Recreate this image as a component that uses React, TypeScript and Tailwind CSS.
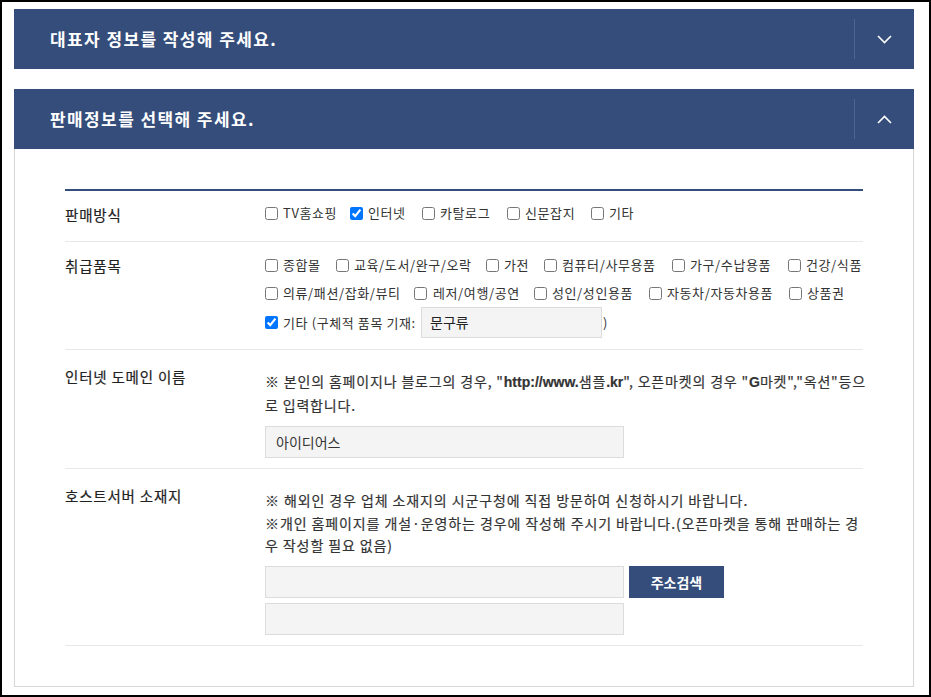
import React from "react";

const FONT = "font-['Noto_Sans_CJK_KR','Noto_Sans',sans-serif]";
const LAT = "font-['Liberation_Sans','Noto_Sans_CJK_KR',sans-serif] font-bold tracking-normal";

function Chevron({ up }: { up?: boolean }) {
  return (
    <svg width="15" height="9" viewBox="0 0 15 9" fill="none">
      {up ? (
        <polyline points="1,8 7.5,1.5 14,8" stroke="white" strokeWidth="1.6" />
      ) : (
        <polyline points="1,1 7.5,7.5 14,1" stroke="white" strokeWidth="1.6" />
      )}
    </svg>
  );
}

function Header({ title, up }: { title: string; up?: boolean }) {
  return (
    <div className="flex h-[60px] items-center bg-[#344d7a]">
      <div className="flex-1 pl-[36px] text-[17px] font-bold tracking-[1.4px] text-white">{title}</div>
      <div className="h-[40px] w-[1px] bg-[#4d6590]" />
      <div className="flex h-full w-[59px] items-center justify-center">
        <Chevron up={up} />
      </div>
    </div>
  );
}

function Opt({ label, checked, w, gap }: { label: string; checked?: boolean; w?: string; gap?: string }) {
  return (
    <label className={`flex h-full shrink-0 items-center whitespace-nowrap ${w ?? ""}`}>
      <input type="checkbox" defaultChecked={checked} className="m-0 h-[13px] w-[13px] shrink-0" />
      <span className={gap ?? "ml-[5px]"}>{label}</span>
    </label>
  );
}

const LABEL = "w-[200px] shrink-0 text-[14.5px] tracking-[0.8px] text-[#222] [-webkit-text-stroke:0.2px_#222]";
const PARA = "whitespace-nowrap text-[14px] leading-[22.5px] text-[#333] [-webkit-text-stroke:0.2px_#333]";

export default function App() {
  return (
    <div className={`box-border h-[697px] w-[931px] overflow-hidden border-2 border-black bg-white ${FONT}`}>
      <div className="ml-[12px] mt-[7px] w-[900px]">
        <Header title="대표자 정보를 작성해 주세요." />
        <div className="h-[20px]" />
        <Header title="판매정보를 선택해 주세요." up />
        <div className="border border-t-0 border-[#d6d6d6] px-[50px] pb-[40px] pt-[40px]">
          <div className="border-t-2 border-[#344d7a] text-[#333]">
            {/* Row 1 */}
            <div className="flex border-b border-[#e8e8e8] pb-[14px] pt-[8px]">
              <div className={`flex h-[28px] items-center pt-[4px] ${LABEL}`}>판매방식</div>
              <div className="flex h-[28px] text-[13px] tracking-[0.6px]">
                <Opt label="TV홈쇼핑" w="w-[85px]" />
                <Opt label="인터넷" checked w="w-[72px]" />
                <Opt label="카탈로그" w="w-[85px]" />
                <Opt label="신문잡지" w="w-[84px]" />
                <Opt label="기타" />
              </div>
            </div>
            {/* Row 2 */}
            <div className="flex border-b border-[#e8e8e8] pb-[11px] pt-[9px]">
              <div className={`flex h-[28px] items-center pt-[2px] ${LABEL}`}>취급품목</div>
              <div className="flex flex-col text-[13px] tracking-[0.6px]">
                <div className="flex h-[28px]">
                  <Opt label="종합몰" w="w-[71px]" />
                  <Opt label="교육/도서/완구/오락" w="w-[150px]" />
                  <Opt label="가전" w="w-[58px]" />
                  <Opt label="컴퓨터/사무용품" w="w-[128px]" />
                  <Opt label="가구/수납용품" w="w-[116px]" />
                  <Opt label="건강/식품" />
                </div>
                <div className="flex h-[28px]">
                  <Opt label="의류/패션/잡화/뷰티" w="w-[149px]" />
                  <Opt label="레저/여행/공연" w="w-[120px]" gap="ml-[6px]" />
                  <Opt label="성인/성인용품" w="w-[115px]" />
                  <Opt label="자동차/자동차용품" w="w-[140px]" />
                  <Opt label="상품권" />
                </div>
                <div className="flex h-[31px] items-center">
                  <Opt label="기타 (구체적 품목 기재:" checked w="w-[156px]" />
                  <div className="flex h-[31px] w-[181px] items-center border border-[#dcdcdc] bg-[#f4f4f4] pl-[8px] text-[14px] tracking-normal text-[#222]">
                    문구류
                  </div>
                  <span className="ml-[1px]">)</span>
                </div>
              </div>
            </div>
            {/* Row 3 */}
            <div className="flex border-b border-[#e8e8e8] pb-[10px] pt-[17px]">
              <div className={`leading-[20px] ${LABEL}`}>인터넷 도메인 이름</div>
              <div className="pt-[3px]">
                <p className={`${PARA} tracking-[0.83px]`}>
                  ※ 본인의 홈페이지나 블로그의 경우, "<span className={LAT}>http://www.</span>샘플
                  <span className={LAT}>.kr</span>", 오픈마켓의 경우 "<span className={LAT}>G</span>마켓","옥션"등으
                  <br />로 입력합니다.
                </p>
                <div className="mt-[10px] flex h-[32px] w-[359px] items-center border border-[#dcdcdc] bg-[#f4f4f4] pl-[10px] text-[14px] text-[#333]">
                  아이디어스
                </div>
              </div>
            </div>
            {/* Row 4 */}
            <div className="flex border-b border-[#e8e8e8] pb-[10px] pt-[17px]">
              <div className={`leading-[20px] ${LABEL}`}>호스트서버 소재지</div>
              <div className="pt-[3px]">
                <p className={`${PARA} tracking-[0.9px]`}>
                  ※ 해외인 경우 업체 소재지의 시군구청에 직접 방문하여 신청하시기 바랍니다.
                  <br />※개인 홈페이지를 개설·운영하는 경우에 작성해 주시기 바랍니다.(오픈마켓을 통해 판매하는 경
                  <br />우 작성할 필요 없음)
                </p>
                <div className="mt-[9.5px] flex items-center">
                  <div className="h-[32px] w-[359px] border border-[#dcdcdc] bg-[#f4f4f4]" />
                  <button className="ml-[5px] flex h-[32px] w-[95px] items-center justify-center bg-[#344d7a] text-[14px] font-bold text-white">
                    주소검색
                  </button>
                </div>
                <div className="mt-[5px] h-[32px] w-[359px] border border-[#dcdcdc] bg-[#f4f4f4]" />
              </div>
            </div>
          </div>
        </div>
      </div>
    </div>
  );
}
